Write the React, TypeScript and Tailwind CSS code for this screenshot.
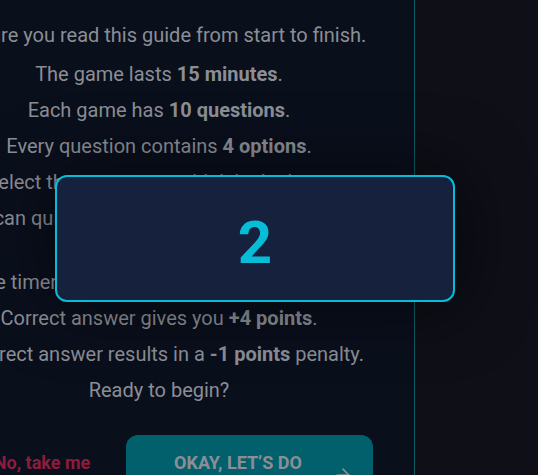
import { ArrowRight } from "lucide-react";

const rules = [
  { before: "The game lasts ", strong: "15 minutes", after: "." },
  { before: "Each game has ", strong: "10 questions", after: "." },
  { before: "Every question contains ", strong: "4 options", after: "." },
  { before: "Select the answer you think is the best.", strong: "", after: "" },
  { before: "You can quit the game at any time, but all your progress will be lost.", strong: "", after: "" },
  { before: "The timer starts once you click the button.", strong: "", after: "" },
  { before: "Correct answer gives you ", strong: "+4 points", after: "." },
  { before: "Incorrect answer results in a ", strong: "-1 points", after: " penalty." },
];

function Countdown({ value }: { value: number }) {
  return (
    <div className="absolute left-[55px] top-[175px] flex h-[127px] w-[400px] items-center justify-center rounded-xl border-2 border-[#06bcd6] bg-[#16213d] pt-[9px] shadow-[0_0_70px_rgba(0,0,0,0.55)]">
      <span className="text-[60px] font-bold leading-none text-[#06bcd6]">{value}</span>
    </div>
  );
}

export default function App() {
  return (
    <div className="relative flex h-screen w-full overflow-hidden bg-[#0e0f17] font-[Roboto] text-[#8b8e95]">
      {/* Guide panel */}
      <div className="flex h-full w-[415px] shrink-0 flex-col overflow-hidden border-r border-[#0e5d66] bg-[#0a0f1c]">
        <div className="-ml-[51px] w-[420px] shrink-0 pt-[21px] text-center text-xl">
          <p>Be sure you read this guide from start to finish.</p>
          <ul className="mt-[11px] space-y-2">
            {rules.map((r, i) => (
              <li key={i}>
                {r.before}
                {r.strong && <strong className="font-bold">{r.strong}</strong>}
                {r.after}
              </li>
            ))}
            <li>Ready to begin?</li>
          </ul>
        </div>

        {/* Actions */}
        <div className="mt-[31px] flex shrink-0 items-start justify-end gap-4 pr-[41px]">
          <button className="w-[136px] shrink-0 px-3 py-4 text-center text-lg font-bold leading-6 text-[#8e1b3d]">
            No, take me back
          </button>
          <button className="flex w-[247px] shrink-0 items-center rounded-xl bg-[#02606c] py-4 pl-[37px] pr-5 text-lg font-bold uppercase leading-6">
            <span className="w-[150px] text-center">Okay, let’s do this</span>
            <ArrowRight size={20} className="ml-auto" />
          </button>
        </div>
      </div>

      <Countdown value={2} />
    </div>
  );
}
